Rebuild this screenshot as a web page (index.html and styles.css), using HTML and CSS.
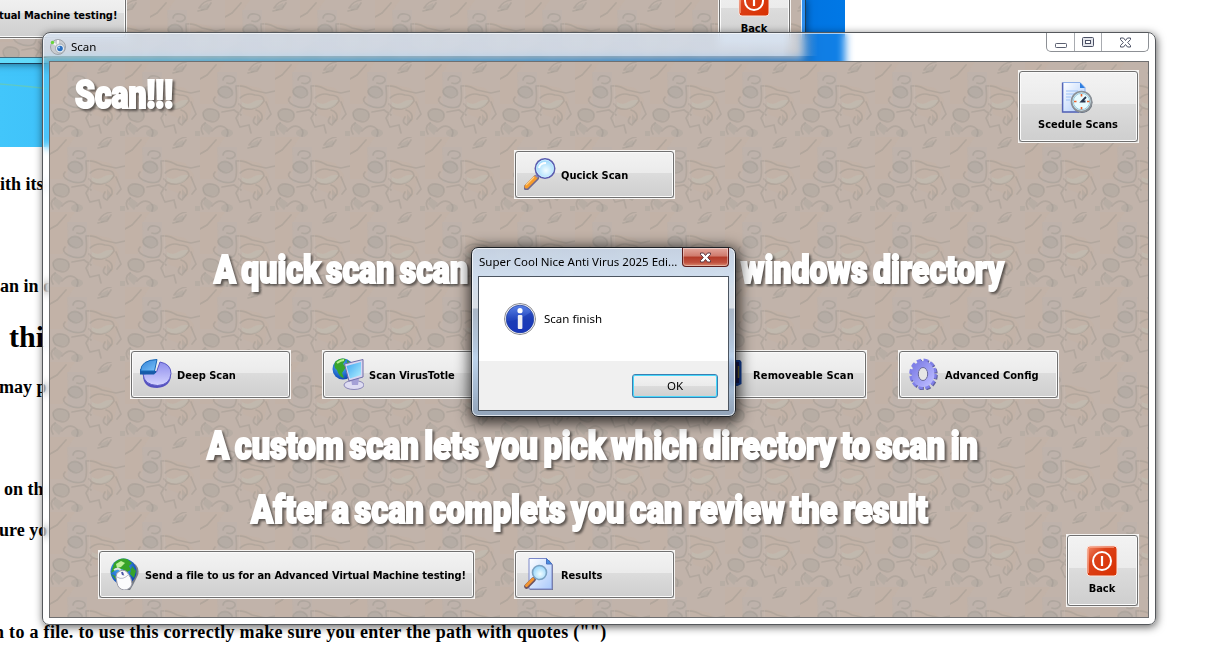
FILE: index.html
```html
<!DOCTYPE html>
<html lang="en">
<head>
<meta charset="utf-8">
<title>Scan</title>
<link rel="stylesheet" href="styles.css">
</head>
<body>
<svg class="defs" width="0" height="0" aria-hidden="true">
  <defs>
    <linearGradient id="gRed" x1="0" y1="0" x2="1" y2="1"><stop offset="0" stop-color="#f08a6a"/><stop offset=".35" stop-color="#dc4018"/><stop offset="1" stop-color="#d83000"/></linearGradient>
    <linearGradient id="gPage" x1="0" y1="0" x2="1" y2="1"><stop offset="0" stop-color="#ffffff"/><stop offset="1" stop-color="#a9c9fb"/></linearGradient>
    <radialGradient id="gLens" cx=".55" cy=".6" r=".6"><stop offset="0" stop-color="#f2fdff"/><stop offset="1" stop-color="#92d4fb"/></radialGradient>
    <linearGradient id="gViolet" x1="0" y1="0" x2="1" y2="1"><stop offset="0" stop-color="#7f7fe6"/><stop offset="1" stop-color="#b9b9ff"/></linearGradient>
    <linearGradient id="gPie" x1="0" y1="0" x2="0" y2="1"><stop offset="0" stop-color="#8d8cec"/><stop offset="1" stop-color="#d4d4ff"/></linearGradient>
    <linearGradient id="gSlice" x1="0" y1="0" x2="1" y2="1"><stop offset="0" stop-color="#2f7fd6"/><stop offset="1" stop-color="#7cc4fa"/></linearGradient>
    <radialGradient id="gGlobe" cx=".4" cy=".35" r=".7"><stop offset="0" stop-color="#4fb8ff"/><stop offset="1" stop-color="#0a3fae"/></radialGradient>
    <linearGradient id="gScreen" x1="0" y1="0" x2="1" y2="1"><stop offset="0" stop-color="#3aa4f0"/><stop offset="1" stop-color="#b2f0ff"/></linearGradient>
    <linearGradient id="gInfo" x1="0" y1="0" x2="0" y2="1"><stop offset="0" stop-color="#5b83e8"/><stop offset=".5" stop-color="#2447be"/><stop offset="1" stop-color="#1c38c8"/></linearGradient>
    <filter id="soft" x="0" y="0" width="1" height="1"><feGaussianBlur stdDeviation=".7"/></filter>
    <pattern id="stone" width="75" height="75" patternUnits="userSpaceOnUse">
      <rect width="75" height="75" fill="#c1b3aa"/>
      <g filter="url(#soft)">
      <rect width="75" height="75" fill="none"/>
      <path d="M0 0h25l-7 10 2 20-8 12H0zM40 22l20 4 9 12-6 22-20-8z" fill="#c4b1a4" opacity=".5"/>
      <path d="M17 10h20v14l-3 22H18z" fill="#bab1ac" opacity=".45"/>
      <g fill="none" stroke="#9f9890" stroke-width="1.700" opacity=".46" stroke-linecap="round">
        <path d="M23 18q1-5 7-4 6 1 5 5-3 4-8 2M19 27q4-4 9-2 6 3 4 8-5 5-11 1-5-4-2-7M15 35q-4 4 3 8 8 4 14 2 6-1 4-20M36 24q8-1 16 4l14 3 9-2M40 36q7-6 15-3 9 0 9 6-4 6-12 8-9 1-13-5M56 48q7 2 6 9l-5 6q-6-2-2-8M42 46l-6 10 4 9 9-2 2 8M3 51q2-5 9-4 8 1 7 8-3 7-10 4-6-1-6-8M5 61q-6 4-2 11M12 69q6-7 12-4 6 3 3 9M49 8q4-7 12-8M48 11l9-2 4-6M0 17l7-4 9-10M22 50l12-2 7 5M66 40l5 12-4 5"/>
      </g>
      <g fill="#93958f" opacity=".22"><ellipse cx="25" cy="30" rx="7" ry="5"/><ellipse cx="11" cy="53" rx="8" ry="6"/><ellipse cx="27" cy="71" rx="6" ry="4"/><path d="M5 60l8 6-4 7-6-6zM50 7l8-4 1 4-8 4zM57 52l5 6-5 4z"/><rect x="70" y="69" width="5" height="5"/></g>
      <path d="M42 40q5 3 9 1 6-4 12-3-1 5-7 8-9 2-14-2z" fill="#c4c3b8" opacity=".4"/>
      </g>
      <path d="M39.500 23v40" stroke="#cbbfb8" stroke-width="1" opacity=".25"/>
    </pattern>
    <symbol id="i-power" viewBox="0 0 32 32"><rect x="1" y="1" width="30" height="30" rx="3" fill="url(#gRed)" stroke="#fbe4dc"/><path d="M2.500 28V4q0-1.500 1.500-1.500h24" fill="none" stroke="#ffb59a" opacity=".6"/><circle cx="16" cy="16" r="9" fill="none" stroke="#fff" stroke-width="2"/><path d="M16 11v10" stroke="#fff" stroke-width="2.200"/></symbol>
    <symbol id="i-lens" viewBox="0 0 32 32"><path d="M2.500 29.500l9.500-9.500" stroke="#71688c" stroke-width="6" stroke-linecap="round"/><path d="M2.500 28.500l9-9" stroke="#f59b2c" stroke-width="4" stroke-linecap="round"/><path d="M2 27l8-8" stroke="#ffd083" stroke-width="1.200"/><path d="M12 19l3-3" stroke="#888ab5" stroke-width="3"/><circle cx="21" cy="10.500" r="9.700" fill="url(#gLens)" stroke="#5c5cae" stroke-width="1.600"/><circle cx="21" cy="10.500" r="8.400" fill="none" stroke="#c8eaff" stroke-width="1"/><path d="M15 10q1-5 7-5" fill="none" stroke="#fff" stroke-width="2"/></symbol>
    <symbol id="i-pie" viewBox="0 0 32 32"><path d="M3 17q0 13 14 13 14-1 14-14z" fill="#5552c0"/><path d="M16.500 14L20 4q11 2 11 11.500Q30 27 17.500 27.500 4 27 3 16z" fill="url(#gPie)" stroke="#5a58c4"/><path d="M0 11v5.500h14l2-2V13z" fill="#175aa8"/><path d="M.5 13Q1 2 17 1.500L14.500 13z" fill="url(#gSlice)" stroke="#1766b4"/></symbol>
    <symbol id="i-net" viewBox="0 0 32 32"><circle cx="11" cy="11" r="10.500" fill="url(#gGlobe)"/><path d="M3 4q5-5 11-3l-3 5 3 3-4 6 2 5q-5-1-7-8-4-2-2-8zM15 2l6 5-5 2z" fill="#39a52c"/><path d="M5 5q4-3 7-3" stroke="#b4f08c" fill="none" stroke-width="2"/><ellipse cx="22" cy="27" rx="10" ry="4.500" fill="#dedcf2" stroke="#8b87b8"/><path d="M19 20h8l-1 7h-6z" fill="#a5a1d6"/><path d="M12.500 6L31 1.500V19L17 23z" fill="#d8d6f2" stroke="#716da8"/><path d="M14.500 8L29 4v13l-11 3.500z" fill="url(#gScreen)"/></symbol>
    <symbol id="i-gear" viewBox="0 0 32 32"><ellipse cx="16" cy="17" rx="11.800" ry="13.500" fill="none" stroke="#60609c" stroke-width="4" stroke-dasharray="4.300 2.350"/><ellipse cx="15" cy="16" rx="11.800" ry="13.500" fill="none" stroke="#8080e8" stroke-width="4" stroke-dasharray="4.300 2.350"/><ellipse cx="15" cy="16" rx="8.200" ry="9.800" fill="none" stroke="url(#gViolet)" stroke-width="6.500"/><ellipse cx="15" cy="16" rx="4.700" ry="6.500" fill="#e5e5e5" stroke="#65659a"/></symbol>
    <symbol id="i-mouse" viewBox="0 0 32 32"><path d="M20 2q13 5 10 15l-5 10-3 5h-6" fill="#5d6470" opacity=".8"/><circle cx="15.500" cy="13.500" r="13" fill="url(#gGlobe)"/><path d="M6 5q6-6 13-4l5 4-3 3 2 4-4 2-5-3-6 1-5 3zM3 16l4 2 2 5zM24 8l4 5-2 7-4-4z" fill="#36a329"/><path d="M8 6l5-3 4 2-4 4-4 1z" fill="#bff099"/><path d="M6 12q5-3 7 1l3 2" fill="none" stroke="#dfe0e8" stroke-width="2"/><path d="M9 15q6-5 10-1 5 6 5 12-2 6-8 6-6-1-7-7-2-7 0-10z" fill="#fbfbfd" stroke="#9a9aa6"/><path d="M9 19q6 4 12-3M14 14l2 4" stroke="#b9bac8" fill="none"/><path d="M14 14l1 3" stroke="#4d55a8" stroke-width="2"/></symbol>
    <symbol id="i-find" viewBox="0 0 32 32"><path d="M6 2h19l4 5v25H6z" fill="#76768e"/><path d="M5 .5h17.500L28 6v25H5z" fill="url(#gPage)" stroke="#7a87c8"/><path d="M22.500 .5V6H28z" fill="#4a8ee0" stroke="#4a70c0"/><path d="M2.500 28.500l7-7" stroke="#6e5360" stroke-width="4.600" stroke-linecap="round"/><path d="M2.500 27.500l6.500-6.500" stroke="#f39530" stroke-width="3" stroke-linecap="round"/><circle cx="15.500" cy="14.500" r="7" fill="url(#gLens)" stroke="#7ba2c2" stroke-width="1.600"/></symbol>
    <symbol id="i-clock" viewBox="0 0 32 32"><path d="M2 1.500h17l5 5V31H2z" fill="url(#gPage)" stroke="#8fb0ea"/><path d="M1.500 1.500V31H18" fill="none" stroke="#5864b4" stroke-width="1.300"/><path d="M19 1.500v5.500h5z" fill="#2e7ee0"/><path d="M5 10h12M5 13h8M5 16h5M5 19h4" stroke="#9cc2f7"/><circle cx="21" cy="21.500" r="10.500" fill="#626a74"/><circle cx="20.500" cy="20.500" r="10" fill="#d9eff7" stroke="#8a9198" stroke-width="1.700"/><circle cx="20.500" cy="20.500" r="8.200" fill="#e8fbff" stroke="#9bcbdc"/><path d="M20.500 13v2.500M20.500 26v2.500M13 20.500h2.500M26 20.500h2.500" stroke="#e8602c" stroke-width="1.600"/><path d="M25 16l-4.500 4.500h4" stroke="#27344c" fill="none" stroke-width="1.800"/></symbol>
    <symbol id="i-drive" viewBox="0 0 32 32"><path d="M0 2h24l1.500 2v22l-4 2H0z" fill="#12409c"/><rect x="4" y="4" width="19" height="21" fill="#1b1c58"/><path d="M22.500 8v12" stroke="#746a30" stroke-width="1.500"/></symbol>
    <symbol id="i-x" viewBox="0 0 12 11"><path d="M1 1h3l2 2.500L8 1h3v1.500L8.200 5.500 11 8.500V10H8L6 7.500 4 10H1V8.500l2.800-3L1 2.500z"/></symbol>
  </defs>
</svg>

<div class="desktop">
  <section class="help-page">
    <p class="l1">ith its</p>
    <p class="l2">an in c</p>
    <p class="l3">thi</p>
    <p class="l4">may p</p>
    <p class="l5">on th</p>
    <p class="l6">ure yo</p>
    <p class="l7">n to a file. to use this correctly make sure you enter the path with quotes ("")</p>
  </section>
  <div class="wallpaper"><svg width="845" height="147"><path d="M0 84Q25 86 60 90" fill="none" stroke="#5fc9c4" stroke-width="1.500"/></svg></div>
  <section class="back-window">
    <svg class="texture" width="801" height="57"><rect x="0" y="0" width="876" height="57" fill="url(#stone)"/></svg>
    <div class="back-row">
      <div class="btn ghost-send"><span class="label wide">tual Machine testing!</span></div>
      <div class="btn tall ghost-back"><svg class="ico" width="32" height="32"><use href="#i-power"/></svg><span class="label">Back</span></div>
    </div>
  </section>

  <section class="window">
    <header class="titlebar">
      <svg class="app" width="16" height="16" viewBox="0 0 16 16"><circle cx="8" cy="8" r="7.500" fill="#c9ccd0" stroke="#8b8f94" stroke-width=".7"/><path d="M2 3l4 3M8 1v5" stroke="#f4f4f4" stroke-width="2"/><circle cx="2.500" cy="3.500" r="1.700" fill="#68d63a"/><circle cx="10" cy="9.500" r="4.500" fill="#e7edf2" stroke="#8e979f" stroke-width=".7"/><circle cx="10" cy="9.500" r="2.800" fill="#2a6fc0"/><circle cx="9" cy="8.500" r="1" fill="#a8d7fa"/></svg>
      <span class="title">Scan</span>
      <div class="caps">
        <span class="cap"><svg width="13" height="11"><rect x="1.500" y="6.500" width="11" height="4" rx=".8" fill="#fff" stroke="#5a5f70"/></svg></span>
        <span class="cap mid"><svg width="13" height="11"><rect x=".5" y=".5" width="11" height="9" rx="1" fill="#e4e6ec" stroke="#4b5064"/><rect x="3.500" y="3.500" width="5" height="3" fill="#fff" stroke="#4b5064"/></svg></span>
        <span class="cap last"><svg class="x-dark" width="13" height="11"><use href="#i-x"/></svg></span>
      </div>
    </header>
    <main class="panel">
      <svg class="texture" width="1098" height="555"><rect width="1098" height="555" fill="url(#stone)"/></svg>
      <div class="top">
        <svg class="headline" width="120" height="44"><text x="2" y="37" textLength="98" lengthAdjust="spacingAndGlyphs">Scan!!!</text></svg>
        <div class="btn tall schedule"><svg class="ico" width="32" height="32"><use href="#i-clock"/></svg><span class="label">Scedule Scans</span></div>
      </div>
      <div class="cells quick">
        <div class="btn c3"><svg class="ico" width="32" height="32"><use href="#i-lens"/></svg><span class="label">Qucick Scan</span></div>
      </div>
      <svg class="headline h1" width="860" height="44"><text x="40" y="37" textLength="254" lengthAdjust="spacingAndGlyphs">A quick scan scan</text><text x="567" y="37" textLength="263" lengthAdjust="spacingAndGlyphs">windows directory</text></svg>
      <div class="cells kinds">
        <div class="btn"><svg class="ico" width="32" height="32"><use href="#i-pie"/></svg><span class="label">Deep Scan</span></div>
        <div class="btn"><svg class="ico" width="32" height="32"><use href="#i-net"/></svg><span class="label">Scan VirusTotle</span></div>
        <div class="btn c4"><svg class="ico" width="32" height="32"><use href="#i-drive"/></svg><span class="label spread">Removeable Scan</span></div>
        <div class="btn"><svg class="ico" width="32" height="32"><use href="#i-gear"/></svg><span class="label">Advanced Config</span></div>
      </div>
      <svg class="headline h2" width="860" height="44"><text x="33" y="37" textLength="771" lengthAdjust="spacingAndGlyphs">A custom scan lets you pick which directory to scan in</text></svg>
      <svg class="headline h3" width="860" height="44"><text x="77" y="37" textLength="677" lengthAdjust="spacingAndGlyphs">After a scan complets you can review the result</text></svg>
      <div class="bottom">
        <div class="btn send"><svg class="ico" width="32" height="32"><use href="#i-mouse"/></svg><span class="label wide">Send a file to us for an Advanced Virtual Machine testing!</span></div>
        <div class="btn results"><svg class="ico" width="32" height="32"><use href="#i-find"/></svg><span class="label">Results</span></div>
        <div class="btn tall back"><svg class="ico" width="32" height="32"><use href="#i-power"/></svg><span class="label">Back</span></div>
      </div>
    </main>
  </section>

  <section class="dialog">
    <header class="dlg-bar"><span class="dlg-title">Super Cool Nice Anti Virus 2025 Edi...</span><span class="close"><svg class="x-light" width="13" height="11"><use href="#i-x"/></svg></span></header>
    <div class="dlg-body">
      <div class="message">
        <svg width="32" height="32" viewBox="0 0 32 32"><circle cx="16" cy="16" r="15.500" fill="#fff" stroke="#8a8a90"/><circle cx="16" cy="16" r="13.800" fill="url(#gInfo)" stroke="#27449e" stroke-width=".8"/><path d="M3 18Q15 18 27 9q2 3 2 7A13 13 0 0 1 3 18z" fill="#1634ae" opacity=".55"/><circle cx="16" cy="7.700" r="2.600" fill="#fff"/><rect x="13.800" y="12" width="4.600" height="14" rx="1" fill="#f0f0f4"/></svg>
        <span>Scan finish</span>
      </div>
      <footer><span class="ok">OK</span></footer>
    </div>
  </section>
</div>
</body>
</html>
```
FILE: styles.css
```css
body { margin: 0; background: #fff; }
.defs { display: block; width: 0; height: 0; }
.desktop { position: relative; width: 1207px; height: 668px; overflow: hidden; background: #fff; }

/* Page of text under the windows */
.help-page { padding-top: 174px; font: bold 18px/20px "Liberation Serif", serif; color: #000; }
.help-page p { margin: 0; height: 20px; white-space: nowrap; }
.help-page .l2 { margin-top: 82px; }
.help-page .l3 { margin-top: 26px; padding-left: 9px; font-size: 30px; line-height: 30px; height: 30px; }
.help-page .l4 { margin-top: 25px; margin-left: -1px; }
.help-page .l5 { margin-top: 82px; padding-left: 4px; }
.help-page .l6 { margin-top: 21px; margin-left: -1px; }
.help-page .l7 { margin-top: 82px; margin-left: -6px; letter-spacing: .3px; }

.wallpaper { position: absolute; left: 0; top: 0; width: 845px; height: 147px; background: linear-gradient(90deg, #42c6fb 0, #2aa6f2 45%, #0071de 92%, #0078e6); }
.back-window { position: absolute; left: -68px; top: 0; width: 874px; height: 64px; box-sizing: border-box; overflow: hidden; background: linear-gradient(90deg, #62dcfb 8%, #52b4f4 60%, #2f8fee); border: solid #1b3f5c; border-width: 0 1px 1px 0; box-shadow: 0 0 8px #0008; }
.back-window .texture { left: 68px; border-right: 1px solid #e8f4ff; border-bottom: 1px solid #406c80; }
.back-row { position: relative; display: flex; justify-content: space-between; margin-top: -26px; width: 859px; }
.back-row .ghost-send { width: 195px; margin-top: 16px; padding-left: 66px; }
.back-row .ghost-back { width: 73px; }

/* Aero window */
.window { position: absolute; left: 42px; top: 32px; width: 1114px; height: 593px; box-sizing: border-box; padding: 0 6px 6px; border: 1px solid #55585c; border-radius: 8px 8px 7px 7px; background: linear-gradient(90deg, #d8e8fca8 0, #d8e8fca8 740px, #d2e4fc00 775px) 0 0 / 100% 23px no-repeat, #ffffff10; backdrop-filter: blur(4px); box-shadow: inset 0 0 0 1px #ffffffa0, 1px 2px 9px #000000a0; }
.titlebar { display: flex; align-items: flex-start; height: 28px; font: 12px/16px "Noto Sans", sans-serif; color: #000; }
.app { margin: 6px 5px 0 1px; }
.title { margin-top: 6px; font-size: 11.500px; }
.caps { display: flex; margin-left: auto; height: 18px; border: solid #8d9095; border-width: 0 1px 1px; border-radius: 0 0 5px 5px; background: #ffffffa0; }
.cap { display: flex; align-items: center; justify-content: center; width: 27px; border-right: 1px solid #a8abb0; }
.cap.mid { width: 26px; }
.cap svg { display: block; }
.cap.last { width: 46px; border: 0; }
.x-dark { fill: #fff; stroke: #4b5064; overflow: visible; }

.panel { position: relative; display: flex; flex-direction: column; width: 1098px; height: 555px; border: 1px solid #6f6f70; overflow: hidden; }
.texture { position: absolute; left: 0; top: 0; }
.top { position: relative; display: flex; justify-content: space-between; height: 81px; }
.headline { position: relative; flex: none; display: block; margin-left: 124px; overflow: visible; }
.top .headline { margin: 9px 0 0 23px; }
.headline text { font: 900 38px Roboto, sans-serif; word-spacing: -3px; fill: #fff; stroke: #fff; stroke-width: 2px; filter: drop-shadow(2px 2px 1px #00000080); }
.h1 { margin-top: 47px; }
.h2 { margin-top: 23px; }
.h3 { margin-top: 20px; }

.btn { position: relative; display: flex; align-items: center; box-sizing: border-box; width: 161px; height: 49px; padding-left: 9px; border: 1px solid #f6f4f2; background: linear-gradient(#f3f3f3, #ebebeb 46%, #dcdcdc 47%, #cecece); }
.btn::before { content: ""; position: absolute; inset: 0; border: 1px solid #707070; border-radius: 3px; box-shadow: inset 0 0 0 1px #fbfbfb; }
.ico { position: relative; flex: none; display: block; margin: 0 5px 1px 0; }
.label { position: relative; padding-top: 2px; font: bold 11px/14px "DejaVu Sans Condensed", "Noto Sans", sans-serif; color: #000; white-space: nowrap; }
.label.wide { letter-spacing: -.05px; }
.label.spread { letter-spacing: .15px; }
.btn.tall { flex-direction: column; justify-content: center; gap: 5px; height: 73px; padding: 0 1px 2px 0; }
.tall .ico { margin: 0 0 -1px; top: 1px; }
.schedule { width: 121px; margin: 8px 9px 0 0; }
.schedule .ico { margin-right: 3px; }
.back { width: 73px; margin-left: auto; }

.cells { display: grid; grid-template-columns: repeat(5, 161px); column-gap: 31px; margin-left: 80px; }
.quick { margin-top: 7px; }
.c3 { grid-column: 3; }
.c4 { grid-column: 4; }
.kinds { margin-top: 60px; }
.bottom { display: flex; align-items: flex-start; margin: 4px 9px 0 48px; }
.send { width: 377px; margin-top: 16px; }
.results { margin: 16px 0 0 39px; }

/* Message box */
.dialog { position: absolute; left: 471px; top: 247px; width: 265px; height: 170px; box-sizing: border-box; padding: 0 6px; border: 1px solid #1d2126; border-radius: 7px; background: linear-gradient(180deg, #c6d6eadc 0, #d2e4f8dc 28px, #dde5eee0 60px, #a8b8cce0 61px, #b6cfeae0 110px, #8ca2bce0 168px); backdrop-filter: blur(3px); box-shadow: inset 0 0 0 1px #ffffffb0, 1px 3px 14px 3px #000000b8; }
.dlg-bar { display: flex; justify-content: space-between; height: 28px; font: 11.500px/16px "Noto Sans", sans-serif; }
.dlg-title { margin: 6px 0 0 1px; white-space: nowrap; }
.close { display: flex; align-items: center; justify-content: center; flex: none; width: 45px; height: 18px; border: solid #5b1c1c; border-width: 0 1px 1px; border-radius: 0 0 4px 4px; background: linear-gradient(#e3a79d, #cf7a6c 45%, #b23a28 50%, #c0503e 80%, #d98a70); box-shadow: inset 0 0 0 1px #ffffff60; }
.x-light { fill: #fff; stroke: #5c3a44; overflow: visible; }
.dlg-body { width: 249px; height: 133px; border: 1px solid #4c5560; background: #f0f0f0; }
.message { display: flex; align-items: center; gap: 8px; box-sizing: border-box; height: 84px; padding-left: 25px; background: #fff; font: 11.500px/16px "Noto Sans", sans-serif; }
.dlg-body footer { display: flex; justify-content: flex-end; padding: 13px 10px 0 0; }
.ok { box-sizing: border-box; width: 86px; height: 24px; border: 1px solid #3c7fb1; border-radius: 3px; background: linear-gradient(#f2f2f2, #ebebeb 48%, #dcdcdc 50%, #cfcfcf); box-shadow: inset 0 0 0 1px #48d8fb; font: 11.500px/22px "Noto Sans", sans-serif; text-align: center; }
```
